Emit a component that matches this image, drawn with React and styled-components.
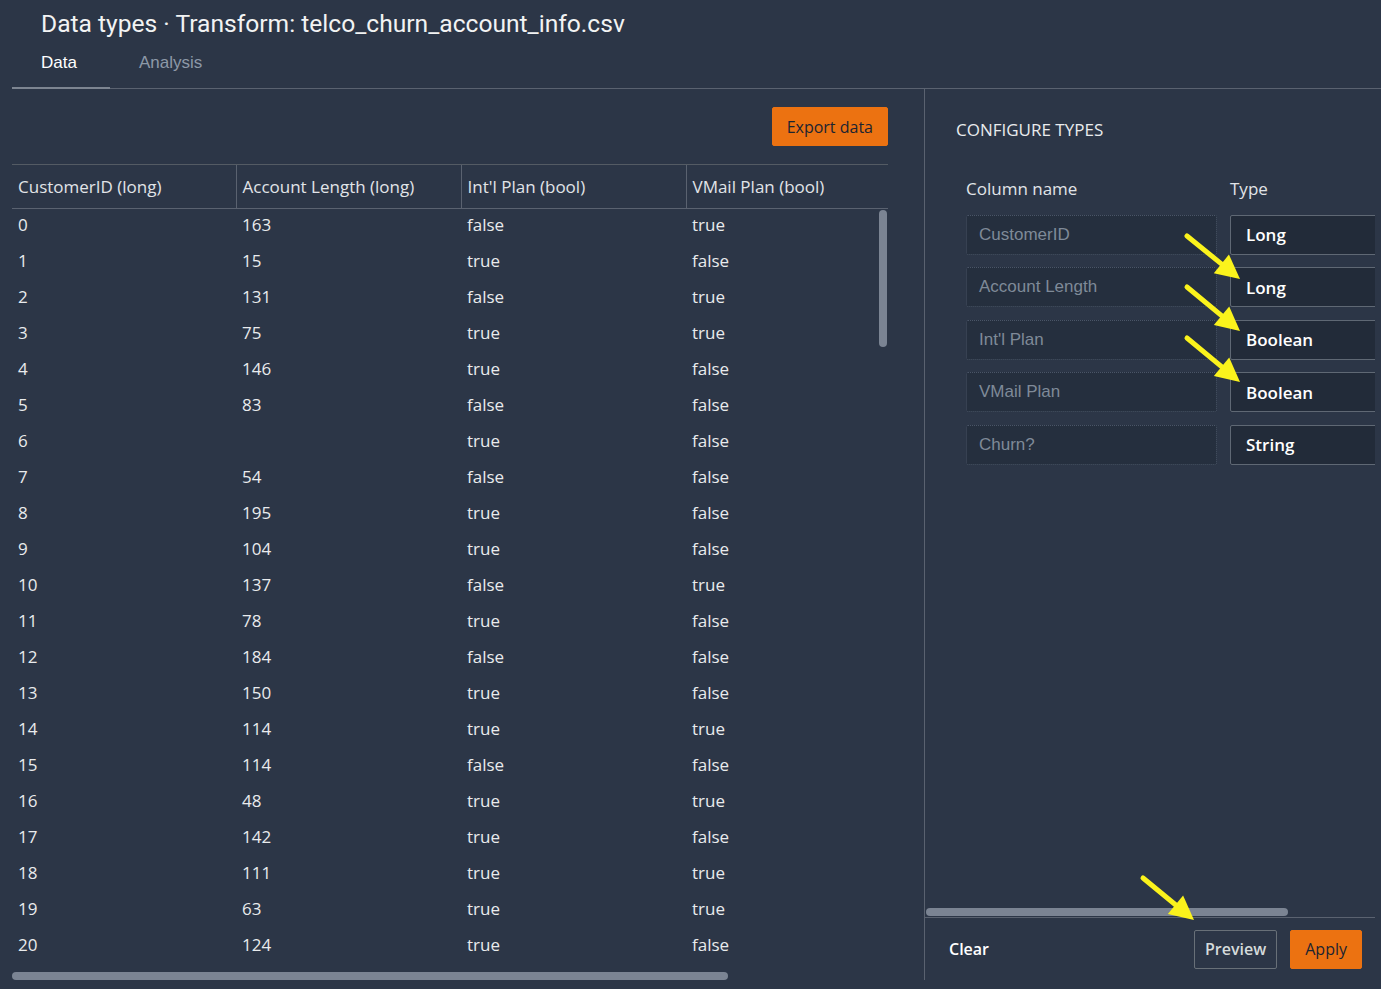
import styled, { createGlobalStyle } from "styled-components";

const GlobalStyle = createGlobalStyle`
  html, body {
    margin: 0;
    padding: 0;
    background: #2c3647;
    color: #e9ebed;
  }
  * { box-sizing: border-box; }
`;

const Page = styled.div`
  position: relative;
  width: 1381px;
  height: 989px;
  overflow: hidden;
  background: #2c3647;
  display: flex;
  flex-direction: column;
`;

const Title = styled.h1`
  margin: 0;
  padding: 9px 0 0 41px;
  height: 45px;
  font-family: Roboto, "Liberation Sans", sans-serif;
  font-weight: 400;
  font-size: 24.6px;
  line-height: 30px;
  color: #f2f3f3;
`;

const Tabs = styled.div`
  display: flex;
  margin-left: 12px;
  height: 44px;
  border-bottom: 1px solid #5a6270;
`;

const Tab = styled.div`
  font-family: "Liberation Sans", Arial, sans-serif;
  font-size: 17px;
  line-height: 36px;
  padding-left: 29px;
  width: ${(p) => (p.$active ? "98px" : "auto")};
  color: ${(p) => (p.$active ? "#ffffff" : "#8d99a8")};
  border-bottom: ${(p) => (p.$active ? "2px solid #7d8591" : "none")};
  height: 44px;
`;

const Main = styled.div`
  flex: 1;
  display: flex;
  min-height: 0;
`;

const LeftPanel = styled.div`
  width: 924px;
  padding: 18px 36px 0 12px;
  display: flex;
  flex-direction: column;
`;

const Toolbar = styled.div`
  display: flex;
  justify-content: flex-end;
  height: 57px;
`;

const Button = styled.button`
  font-family: "Open Sans", "Noto Sans", sans-serif;
  font-size: 16px;
  height: 39px;
  padding: 0 ${(p) => (p.$primary ? "14px" : "10px")};
  border-radius: 2px;
  cursor: pointer;
  background: ${(p) => (p.$primary ? "#ec7211" : "transparent")};
  color: ${(p) => (p.$primary ? "#1b2431" : "#d5dbdb")};
  border: 1px solid ${(p) => (p.$primary ? "#ec7211" : "#687078")};
  font-weight: ${(p) => (p.$primary ? 500 : 600)};
`;

const TableWrap = styled.div`
  position: relative;
  border-top: 1px solid #545b64;
`;

const Table = styled.table`
  width: 876px;
  border-collapse: collapse;
  table-layout: fixed;
  font-family: "Open Sans", "Noto Sans", sans-serif;
  font-size: 17px;
  color: #e9ebed;
`;

const Th = styled.th`
  text-align: left;
  font-weight: 400;
  height: 43px;
  padding: 0 6px;
  border-bottom: 1px solid #5a6270;
  border-left: ${(p) => (p.$first ? "none" : "1px solid #5a6270")};
  white-space: nowrap;
  color: #e1e4e8;
`;

const Td = styled.td`
  height: 36px;
  padding: 0 6px 3px;
  white-space: nowrap;
`;

const VScroll = styled.div`
  position: absolute;
  right: 1px;
  top: 45px;
  width: 8px;
  height: 137px;
  border-radius: 4px;
  background: #7b8493;
`;

const HScroll = styled.div`
  height: 8px;
  border-radius: 4px;
  background: #7b8493;
  width: ${(p) => p.$w}px;
  margin: ${(p) => p.$m || "0"};
`;

const RightPanel = styled.div`
  flex: 1;
  border-left: 1px solid #5a6270;
  margin: 0 6px 9px 0;
  display: flex;
  flex-direction: column;
  overflow: hidden;
`;

const RightBody = styled.div`
  flex: 1;
  padding: 29px 0 0 31px;
`;

const SectionTitle = styled.h2`
  margin: 0;
  font-family: "Open Sans", "Noto Sans", sans-serif;
  font-weight: 500;
  font-size: 17px;
  line-height: 24px;
  color: #e9ebed;
`;

const TypeGrid = styled.div`
  margin-top: 37px;
  margin-left: 10px;
  display: grid;
  grid-template-columns: 251px 160px;
  column-gap: 13px;
  row-gap: 12.5px;
`;

const ColHead = styled.div`
  font-family: "Open Sans", "Noto Sans", sans-serif;
  font-size: 17px;
  line-height: 20px;
  margin-bottom: 3px;
  color: #e1e4e8;
`;

const NameField = styled.div`
  height: 40px;
  border: 1px dotted #4a5567;
  border-radius: 2px;
  background: #252f3e;
  padding: 0 12px;
  display: flex;
  align-items: center;
  font-family: "Liberation Sans", Arial, sans-serif;
  font-size: 17px;
  color: #7f8a98;
`;

const TypeField = styled.div`
  height: 40px;
  border: 1px solid #5f6874;
  border-radius: 2px;
  background: #222b39;
  padding: 0 15px;
  display: flex;
  align-items: center;
  font-family: "Open Sans", "Noto Sans", sans-serif;
  font-weight: 600;
  font-size: 17px;
  color: #ffffff;
`;

const ScrollRow = styled.div`
  border-bottom: 1px solid #5a6270;
  padding: 0 0 1px 1px;
`;

const Footer = styled.div`
  display: flex;
  align-items: center;
  height: 62px;
  padding: 0 13px 0 24px;
  gap: 13px;
`;

const ClearLink = styled.span`
  font-family: "Open Sans", "Noto Sans", sans-serif;
  font-weight: 600;
  font-size: 16px;
  color: #ffffff;
  margin-right: auto;
`;

const Arrows = styled.svg`
  position: absolute;
  left: 0;
  top: 0;
  pointer-events: none;
`;

const rows = [
  [0, 163, false, true],
  [1, 15, true, false],
  [2, 131, false, true],
  [3, 75, true, true],
  [4, 146, true, false],
  [5, 83, false, false],
  [6, "", true, false],
  [7, 54, false, false],
  [8, 195, true, false],
  [9, 104, true, false],
  [10, 137, false, true],
  [11, 78, true, false],
  [12, 184, false, false],
  [13, 150, true, false],
  [14, 114, true, true],
  [15, 114, false, false],
  [16, 48, true, true],
  [17, 142, true, false],
  [18, 111, true, true],
  [19, 63, true, true],
  [20, 124, true, false],
];

const types = [
  ["CustomerID", "Long"],
  ["Account Length", "Long"],
  ["Int'l Plan", "Boolean"],
  ["VMail Plan", "Boolean"],
  ["Churn?", "String"],
];

function Arrow({ x1, y1, x2, y2 }) {
  const dx = x2 - x1;
  const dy = y2 - y1;
  const len = Math.hypot(dx, dy);
  const ux = dx / len;
  const uy = dy / len;
  const head = 24;
  const bx = x2 - ux * head;
  const by = y2 - uy * head;
  const w = 12;
  const p1 = `${bx - uy * w},${by + ux * w}`;
  const p2 = `${bx + uy * w},${by - ux * w}`;
  return (
    <g fill="#fbf31c" stroke="#fbf31c">
      <line x1={x1} y1={y1} x2={bx + ux * 2} y2={by + uy * 2} strokeWidth="5" strokeLinecap="round" />
      <polygon points={`${x2},${y2} ${p1} ${p2}`} stroke="none" />
    </g>
  );
}

export default function App() {
  return (
    <Page>
      <GlobalStyle />
      <Title>Data types · Transform: telco_churn_account_info.csv</Title>
      <Tabs>
        <Tab $active>Data</Tab>
        <Tab>Analysis</Tab>
      </Tabs>
      <Main>
        <LeftPanel>
          <Toolbar>
            <Button $primary>Export data</Button>
          </Toolbar>
          <TableWrap>
            <Table>
              <colgroup>
                <col style={{ width: 224 }} />
                <col style={{ width: 225 }} />
                <col style={{ width: 225 }} />
                <col style={{ width: 202 }} />
              </colgroup>
              <thead>
                <tr>
                  <Th $first>CustomerID (long)</Th>
                  <Th>Account Length (long)</Th>
                  <Th>Int'l Plan (bool)</Th>
                  <Th>VMail Plan (bool)</Th>
                </tr>
              </thead>
              <tbody>
                {rows.map((r) => (
                  <tr key={r[0]}>
                    <Td>{r[0]}</Td>
                    <Td>{r[1]}</Td>
                    <Td>{String(r[2])}</Td>
                    <Td>{String(r[3])}</Td>
                  </tr>
                ))}
              </tbody>
            </Table>
            <VScroll />
          </TableWrap>
          <HScroll $w={716} $m="8px 0 0 0" />
        </LeftPanel>
        <RightPanel>
          <RightBody>
            <SectionTitle>CONFIGURE TYPES</SectionTitle>
            <TypeGrid>
              <ColHead>Column name</ColHead>
              <ColHead>Type</ColHead>
              {types.map(([name, type]) => [
                <NameField key={name + "n"}>{name}</NameField>,
                <TypeField key={name + "t"}>{type}</TypeField>,
              ])}
            </TypeGrid>
          </RightBody>
          <ScrollRow>
            <HScroll $w={362} />
          </ScrollRow>
          <Footer>
            <ClearLink>Clear</ClearLink>
            <Button>Preview</Button>
            <Button $primary>Apply</Button>
          </Footer>
        </RightPanel>
      </Main>
      <Arrows width="1381" height="989">
        <Arrow x1={1187} y1={236} x2={1240} y2={279} />
        <Arrow x1={1187} y1={287} x2={1240} y2={331} />
        <Arrow x1={1187} y1={338} x2={1240} y2={382} />
        <Arrow x1={1143} y1={878} x2={1194} y2={920} />
      </Arrows>
    </Page>
  );
}
